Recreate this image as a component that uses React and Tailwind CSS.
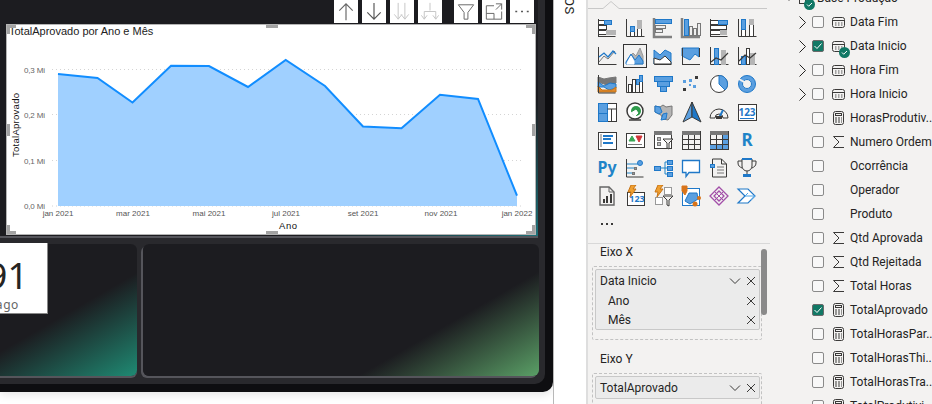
const ink = '#3b3a39';
const blue = '#5a9fe0';
const edge = '#1f78c8';
const gray = '#b5b5b5';

const pts = [
  [58, 74], [97.5, 78], [132.5, 102.5], [171, 65.7], [209, 66], [248, 87], [285.7, 60],
  [325, 86], [363, 126.5], [401.5, 128.3], [440, 94.7], [478, 99], [517, 195.7],
];
const line = pts.map((p) => p.join(',')).join(' ');
const ticks = [
  ['jan 2021', 58], ['mar 2021', 133], ['mai 2021', 209], ['jul 2021', 286],
  ['set 2021', 363], ['nov 2021', 441], ['jan 2022', 517],
];
const grid = [['0,3 Mi', 69.5], ['0,2 Mi', 114.5], ['0,1 Mi', 160.5], ['0,0 Mi', 206]];

function Bx({ x, y, w, h, f = '#fff', s = ink }) {
  return <rect x={x + 0.5} y={y + 0.5} width={w} height={h} fill={f} stroke={s} />;
}

function P({ d, s = ink, f = 'none', w = 1 }) {
  return <path d={d} stroke={s} fill={f} strokeWidth={w} />;
}

function T({ x, y, size, c, children }) {
  return (
    <text x={x} y={y} fontSize={size} fontWeight="700" fill={c} textAnchor="middle" fontFamily="'Noto Sans', sans-serif">
      {children}
    </text>
  );
}

const axes = <P d="M2.5 2v17.5h18" />;
const frame = <P d="M2 1v19h18" s="#808080" w={2.5} />;

// visual picker, row by row
const visuals = [
  <>
    <P d="M2.5 2v18" /><Bx x={2} y={3} w={6} h={4} /><Bx x={8} y={3} w={7} h={4} f={blue} s={edge} /><Bx x={2} y={8} w={8} h={4} /><Bx x={2} y={13} w={8} h={4} /><Bx x={10} y={13} w={9} h={4} f={gray} s={gray} /><P d="M2.5 19.5h17" />
  </>,
  <>
    {axes}<Bx x={6} y={9} w={4} h={10} /><Bx x={6} y={9} w={4} h={5} f={blue} s={edge} /><Bx x={13} y={3} w={4} h={16} /><Bx x={13} y={3} w={4} h={8} f={gray} s={gray} />
  </>,
  <>
    {frame}<Bx x={3} y={2} w={16} h={4} f={blue} s={edge} /><Bx x={3} y={8} w={10} h={3} f="#eee" s="#777" /><Bx x={3} y={12} w={7} h={3} f="#eee" s="#777" />
  </>,
  <>
    {frame}<Bx x={4} y={2} w={4} h={16} f={blue} s={edge} /><Bx x={9} y={9} w={3} h={9} f="#eee" s="#777" /><Bx x={13} y={11} w={3} h={7} f="#eee" s="#777" /><Bx x={17} y={6} w={3} h={12} f="#eee" s="#777" />
  </>,
  <>
    <P d="M2.5 2v18" /><Bx x={2} y={3} w={8} h={4} /><Bx x={10} y={3} w={9} h={4} f={blue} s={edge} /><Bx x={2} y={8} w={16} h={4} /><Bx x={2} y={13} w={10} h={4} /><Bx x={12} y={13} w={6} h={4} f={gray} s={gray} /><P d="M2.5 19.5h17" />
  </>,
  <>
    <P d="M2.5 2v17.5h18" /><Bx x={5} y={2} w={4} h={17} /><Bx x={5} y={2} w={4} h={10} f={blue} s={edge} /><Bx x={13} y={2} w={4} h={17} /><Bx x={13} y={2} w={4} h={5} f={gray} s={gray} />
  </>,
  <>
    {axes}<P d="M3 17l5-6 4 3 7-8" s="#777" /><P d="M3 12l5-4 4 4 5-6 3 3" s={edge} w={1.3} />
  </>,
  <>
    <P d="M4 14l5-6 3 3 4-8 3 8v8H4z" s="#999" f={gray} /><P d="M2 17l5-8 4 6 4-5 4 6v3H2z" s={edge} f={blue} /><P d="M3 18l4-7 3 5v3H3z" s="#fff" f="#fff" />
  </>,
  <>
    <P d="M2 5l6 5 5-5 6 3v11H2z" f={blue} s={edge} /><P d="M2 13l6 2 5-4 6 6v2H2z" f="#fff" s={ink} /><P d="M2.5 19.5h17" />
  </>,
  <>
    <P d="M2 3h17v9l-4-3-5 6-8-4z" f={blue} s={edge} /><P d="M2 19.5h18M2.5 3v17" /><P d="M19.5 3v9" s={ink} />
  </>,
  <>
    {axes}<Bx x={6} y={3} w={4} h={16} f={blue} s={edge} /><Bx x={13} y={5} w={4} h={14} f={gray} s={gray} /><P d="M3 17l5-4 5 2 7-7" w={1.2} />
  </>,
  <>
    {axes}<Bx x={5} y={11} w={4} h={8} f={blue} s={edge} /><Bx x={10} y={3} w={3} h={16} /><Bx x={14} y={8} w={4} h={11} f={gray} s={gray} /><P d="M3 16l6-6 5 3 6-5" w={1.2} />
  </>,
  <>
    <P d="M2 4l6 2 5-1 7-1v6l-7 3-5-2-6-2z" f="#777" s="#777" /><P d="M2 9l6 4 6-3 6 1v4l-7 2-5-3-6 0z" f={blue} s={edge} /><P d="M2 13l4 4h10l4-3v5H2z" f="#e08a2e" s="#c77416" /><P d="M2.5 2v18h17" />
  </>,
  <>
    <P d="M2.5 3v16.5h17" /><Bx x={4} y={11} w={3} h={8} /><Bx x={8} y={6} w={3} h={13} /><Bx x={12} y={6} w={3} h={5} f={blue} s={edge} /><Bx x={15} y={2} w={3} h={17} /><Bx x={15} y={2} w={3} h={6} f={blue} s={edge} />
  </>,
  <>
    <Bx x={2} y={3} w={18} h={5} f={blue} s={edge} /><Bx x={5} y={8} w={12} h={5} f={blue} s={edge} /><Bx x={8} y={13} w={6} h={5} f={blue} s={edge} />
  </>,
  <>
    <rect x="3" y="7" width="3" height="3" fill={blue} /><rect x="15" y="3" width="3" height="3" fill={ink} /><rect x="9" y="6" width="3" height="3" fill={blue} /><rect x="13" y="12" width="3" height="3" fill={blue} /><rect x="9" y="11" width="2" height="2" fill={blue} /><rect x="3" y="15" width="3" height="3" fill={ink} />
  </>,
  <>
    <circle cx="11" cy="11" r="8.5" fill="#fff" stroke={ink} /><P d="M11 2.5a8.5 8.5 0 0 1 6 14.5l-6-6z" f={blue} s={edge} />
  </>,
  <>
    <circle cx="11" cy="11" r="6.5" fill="none" stroke={blue} strokeWidth="4" /><circle cx="11" cy="11" r="8.5" fill="none" stroke={edge} /><circle cx="11" cy="11" r="4.5" fill="#f3f2f1" stroke={edge} /><P d="M3 6l5 3" s="#f3f2f1" w={2} />
  </>,
  <>
    <Bx x={2} y={2} w={18} h={18} /><Bx x={2} y={2} w={9} h={10} f={blue} s={edge} /><Bx x={2} y={12} w={9} h={8} f={blue} s={edge} /><P d="M11.5 8h8.5M15.5 8v12" />
  </>,
  <>
    <circle cx="11" cy="10" r="8" fill="#fff" stroke={ink} strokeWidth="1.5" /><circle cx="12" cy="10" r="5" fill="#2e9a4a" /><P d="M7 12l5-3 2 3-3 3z" f="#fff" s="#fff" /><P d="M5 19h12" w={1.5} />
  </>,
  <>
    <P d="M3 5l5 1 3-2 3 2 6-1v9l-4 5-5-1-2-4-6-3z" f={gray} s="#777" /><P d="M3 5l5 1 2 5-3 2-4-2z" f={blue} s={edge} /><P d="M9 19l2-6 4-1-1 6z" f={blue} s={edge} />
  </>,
  <>
    <P d="M12 1L3 21l9-5z" f={blue} /><P d="M12 1l9 20-9-5z" f={edge} />
  </>,
  <>
    <P d="M2 17a9 9 0 0 1 18 0h-5a4 4 0 0 0-8 0z" f="#f3f2f1" /><P d="M11 17l4-8" s={edge} w={2} /><rect x="8" y="15" width="6" height="3" fill={ink} />
  </>,
  <>
    <Bx x={2} y={3} w={18} h={16} /><T x={11} y={15} size={10} c={edge}>123</T><P d="M4 17.5h14" s={edge} />
  </>,
  <>
    <Bx x={2} y={3} w={18} h={17} /><P d="M5 5v13" s="#777" /><P d="M7 7h10M7 10h8M7 14h10" s={edge} w={2} />
  </>,
  <>
    <Bx x={2} y={4} w={18} h={14} /><P d="M5 12l3-5 3 5z" f="#3aa655" s="#3aa655" /><P d="M12 7h6l-3 6z" f="#d13438" s="#d13438" /><P d="M4 15.5h14" s="#777" />
  </>,
  <>
    <Bx x={2} y={2} w={17} h={17} /><rect x="2" y="2" width="18" height="4" fill="#777" /><Bx x={5} y={8} w={3} h={3} f="#bbb" s="#777" /><Bx x={5} y={13} w={3} h={3} f="#bbb" s="#777" /><P d="M11 10h10l-4 4v6l-2-1v-5z" f="#f3f2f1" />
  </>,
  <>
    <Bx x={2} y={2} w={18} h={18} f="#f3f2f1" /><rect x="2" y="2" width="18" height="4" fill="#777" /><P d="M8.5 6v14M14.5 6v14M2 10.5h18M2 15.5h18" />
  </>,
  <>
    <Bx x={2} y={2} w={18} h={18} f="#f3f2f1" /><rect x="2" y="2" width="18" height="4" fill="#777" /><rect x="14" y="6" width="6" height="14" fill={blue} /><rect x="2" y="15" width="18" height="5" fill={blue} /><P d="M8.5 6v14M14.5 6v14M2 10.5h18M2 15.5h18" />
  </>,
  <T x={11} y={17} size={17} c="#1f84c8">R</T>,
  <T x={11} y={16} size={16} c="#1f84c8">Py</T>,
  <>
    <P d="M2.5 2v18h17" /><P d="M3 7h11M3 11h8M3 16h6" s="#1f84c8" /><circle cx="16" cy="6" r="2.5" fill={blue} stroke={edge} /><Bx x={10} y={10} w={2} h={2} f="#999" s="#777" /><Bx x={8} y={15} w={2} h={2} f="#999" s="#777" />
  </>,
  <>
    <P d="M8 11h5M13 5v12M13 5h2M13 11h2M13 17h2" s="#1f84c8" /><Bx x={2} y={9} w={6} h={4} f={blue} s={edge} /><Bx x={15} y={3} w={5} h={4} f={blue} s={edge} /><Bx x={15} y={9} w={5} h={4} f={blue} s={edge} /><Bx x={15} y={15} w={5} h={4} f={blue} s={edge} />
  </>,
  <P d="M2.5 3.5h17v12H9l-3 4v-4H2.5z" f="#fff" s={edge} w={1.3} />,
  <>
    <P d="M4.5 2h9l5 5v13h-14z" f="#f3f2f1" /><P d="M13.5 2v5h5" /><Bx x={2} y={7} w={4} h={3} f={blue} s={edge} /><P d="M9 10h7M9 13h7M9 16h7" s="#777" />
  </>,
  <>
    <P d="M6 2h10v7a5 5 0 0 1-10 0z" f="#f3f2f1" /><P d="M6 4H2v2c0 3 2 4 4 5M16 4h4v2c0 3-2 4-4 5M11 14v3" /><rect x="6" y="1" width="10" height="2" fill={edge} /><rect x="7" y="17" width="8" height="3" fill={edge} />
  </>,
  <>
    <P d="M4 2h9l5 5v13H4z" f="#f3f2f1" s="#666" w={1.4} /><P d="M13 2v5h5" s="#666" /><rect x="7" y="14" width="2" height="4" fill={ink} /><rect x="10" y="11" width="2" height="7" fill={ink} /><rect x="14" y="9" width="2" height="9" fill={ink} />
  </>,
  <>
    <Bx x={3} y={7} w={17} h={13} /><P d="M7 0h5l-3 4h3l-6 8 1-5H4z" f="#f0a030" s="#c77416" /><T x={13} y={17} size={9} c={edge}>123</T>
  </>,
  <>
    <Bx x={12} y={2} w={7} h={7} s="#999" /><Bx x={3} y={12} w={7} h={7} s="#999" /><P d="M6 0h5l-3 4h3l-6 8 1-5H3z" f="#f0a030" s="#c77416" /><P d="M11 11h10l-4 4v6l-2-1v-5z" f="#f3f2f1" />
  </>,
  <>
    <Bx x={2} y={3} w={17} h={17} s={edge} f="#fff" /><P d="M9 8h8l1 6-8 5-5-3z" f={blue} s={edge} /><P d="M2 1h5v5l-2 4-3-4z" f="#d8741a" s="#d8741a" /><circle cx="19" cy="13" r="2" fill="#d8741a" /><circle cx="15" cy="19" r="2.5" fill="#d8741a" />
  </>,
  <>
    <P d="M11 2l9 9-9 9-9-9z" f="none" s="#a24fa8" w={1.3} /><P d="M11 6l5 5-5 5-5-5z" f="none" s="#a24fa8" w={1.3} /><P d="M7 7l8 8M15 7l-8 8" s="#a24fa8" />
  </>,
  <>
    <P d="M2 4h10l7 7-7 7H2l7-7z" f="#fff" s={edge} w={1.2} /><P d="M9 11h10M12 8l-3 3M15 15l4-4" s="#4aa3e8" />
  </>,
  <>
    <rect x="5" y="10" width="2" height="2" fill={ink} /><rect x="10" y="10" width="2" height="2" fill={ink} /><rect x="15" y="10" width="2" height="2" fill={ink} />
  </>,
];

function Toolbar() {
  return (
    <div className="flex h-6 justify-end gap-1 pr-[4px]">
      <ToolBtn><path d="M12 21V4M5 11l7-7 7 7" stroke="#666" fill="none" strokeWidth="1.2" /></ToolBtn>
      <ToolBtn><path d="M12 3v17M5 13l7 7 7-7" stroke="#555" fill="none" strokeWidth="1.2" /></ToolBtn>
      <ToolBtn><path d="M8 3v17M4 15l4 5 4-5M15 3v17M11 15l4 5 4-5" stroke="#c4c4c4" fill="none" /></ToolBtn>
      <ToolBtn><path d="M12 3v8M6 20v-8h12v8M3 16l3 4 3-4M15 16l3 4 3-4" stroke="#c4c4c4" fill="none" /></ToolBtn>
      <div className="w-1" />
      <ToolBtn><path d="M4 5h16l-6 8v7h-4v-7z" stroke="#666" fill="none" /></ToolBtn>
      <ToolBtn><path d="M12 6H4v14h16v-8M4 14h8v6M14 4h6v6M20 4l-6 6" stroke="#666" fill="none" /></ToolBtn>
      <ToolBtn><path d="M5 12h2M11 12h2M17 12h2" stroke="#555" fill="none" strokeWidth="1.6" /></ToolBtn>
    </div>
  );
}

function ToolBtn({ children }) {
  return (
    <div className="flex h-[23px] w-6 items-center justify-center bg-white">
      <svg width="24" height="23" viewBox="0 0 24 24">{children}</svg>
    </div>
  );
}

function Chart() {
  return (
    <svg className="block h-[197px] w-[528px]" viewBox="7 38 528 197" fontFamily="'Liberation Sans', sans-serif">
      {grid.map(([label, y]) => (
        <g key={label}>
          <line x1="52" x2="524" y1={y} y2={y} stroke="#d4d4d4" strokeDasharray="1 3" />
          <text x="24" y={y + 3} fontSize="8" fill="#666" textLength="21">{label}</text>
        </g>
      ))}
      <polygon points={`58,206 ${line} 517,206`} fill="#a0d0ff" />
      <polyline points={line} fill="none" stroke="#118dff" strokeWidth="2" />
      {ticks.map(([label, x]) => (
        <text key={label} x={x} y="216" fontSize="8" fill="#555" textAnchor="middle">{label}</text>
      ))}
      <text x="288" y="229" fontSize="9.5" fill="#111" textAnchor="middle" textLength="18">Ano</text>
      <text x="0" y="0" fontSize="9.5" fill="#111" textAnchor="middle" textLength="64" transform="translate(19 125) rotate(-90)">TotalAprovado</text>
    </svg>
  );
}

function Handles() {
  const c = 'absolute bg-[#a3a3a3]';
  return (
    <>
      <div className={`${c} left-0 top-0 h-[3px] w-[9px]`} />
      <div className={`${c} left-0 top-0 h-[9px] w-[3px]`} />
      <div className={`${c} right-0 top-0 h-[3px] w-[9px]`} />
      <div className={`${c} right-0 top-0 h-[9px] w-[3px]`} />
      <div className={`${c} bottom-0 left-0 h-[3px] w-[9px]`} />
      <div className={`${c} bottom-0 left-0 h-[9px] w-[3px]`} />
      <div className={`${c} bottom-0 right-0 h-[3px] w-[9px]`} />
      <div className={`${c} bottom-0 right-0 h-[9px] w-[3px]`} />
      <div className={`${c} left-[259px] top-0 h-[3px] w-3`} />
      <div className={`${c} bottom-0 left-[259px] h-[3px] w-3`} />
      <div className={`${c} left-0 top-[99px] h-3 w-[3px]`} />
      <div className={`${c} right-0 top-[99px] h-3 w-[3px]`} />
    </>
  );
}

function Canvas() {
  return (
    <div className="flex h-full w-[553px] shrink-0 flex-col">
      <div className="h-[392px] overflow-hidden rounded-br-[10px] bg-[#0e0e11] pr-2 shadow-[0_3px_8px_rgba(0,0,0,0.1)]">
        <div className="h-[384px] rounded-br-[10px] bg-[#29292d]">
          <div className="h-[236px] w-[538px] bg-[linear-gradient(150deg,#1c1c20_75%,#1d7078_100%)] shadow-[0_2px_0_#55555b]">
            <Toolbar />
            <div className="relative ml-[6px] h-[211px] w-[530px] border border-[#b4b4b4] bg-white">
              <div className="h-[13px] pl-[2px] font-['Liberation_Sans',sans-serif] text-[11px] leading-[13px] text-[#222]">
                TotalAprovado por Ano e Mês
              </div>
              <Chart />
              <Handles />
            </div>
          </div>
          <div className="mt-2 flex h-[132px] w-[539px] gap-[6px]">
            <div className="relative h-full w-[137px] rounded-r-[6px] bg-[linear-gradient(150deg,#1c1c20_51%,#1f8a73_100%)] shadow-[0_2px_0_#55555b]">
              <div className="absolute -top-px left-0 flex h-[71px] w-[48px] flex-col items-end overflow-hidden border-b border-r border-[#888] bg-white pr-[19px] text-[#252423]">
                <span className="mt-[13px] font-['Noto_Sans',sans-serif] text-[36px] leading-[40px] whitespace-nowrap">91</span>
                <span className="mr-[9px] mt-[2px] font-['Noto_Sans',sans-serif] text-[12px] leading-[14px] tracking-[0.6px] text-[#666]">ago</span>
              </div>
            </div>
            <div className="h-full w-[396px] rounded-[6px] bg-[linear-gradient(150deg,#1c1c20_71%,#5a9f66_100%)] shadow-[-2px_2px_0_#55555b]" />
          </div>
        </div>
      </div>
    </div>
  );
}

function X() {
  return (
    <svg width="10" height="10" viewBox="0 0 10 10">
      <path d="M1 1l8 8M9 1l-8 8" stroke="#3b3a39" fill="none" />
    </svg>
  );
}

function Down() {
  return (
    <svg width="12" height="10" viewBox="0 0 12 10">
      <path d="M1 2.5l5 5 5-5" stroke="#3b3a39" fill="none" />
    </svg>
  );
}

function Well({ label, children, className }) {
  return (
    <div className={className}>
      <div className="pl-[12px] text-xs leading-4">{label}</div>
      {children}
    </div>
  );
}

function VisualsPane() {
  return (
    <div className="relative h-full w-[184px] shrink-0 border-l-2 border-[#dedede] text-[#252423]">
      <svg className="block" width="182" height="9" viewBox="0 0 182 9">
        <path d="M0 8.5h15l8-7 8 7h148" fill="none" stroke="#c8c8c8" />
      </svg>
      <div className="ml-[5px] mt-[5px] grid grid-cols-[repeat(6,28px)] auto-rows-[28px]">
        {visuals.map((v, i) => (
          <div key={i} className="flex items-center justify-center">
            <div className={i === 7 ? 'border border-[#333]' : ''}>
              <svg width="22" height="22" viewBox="0 0 22 22" className="block">{v}</svg>
            </div>
          </div>
        ))}
      </div>
      <div className="mt-[5px] h-px bg-[#d8d8d8]" />
      <Well label="Eixo X">
        <div className="ml-[4px] mt-[6px] h-[74px] w-[170px] rounded-[2px] border border-dashed border-[#c2c2c2] p-[2px]">
          <div className="w-[165px] rounded-[2px] border border-[#c8c8c8] bg-[#ebebeb] text-xs">
            <div className="flex h-[21px] items-center pl-[4px] pr-[3px]">
              <span className="flex-1">Data Inicio</span><Down /><span className="ml-[5px]"><X /></span>
            </div>
            <div className="flex h-[19px] items-center pl-3 pr-[3px]">
              <span className="flex-1">Ano</span><X />
            </div>
            <div className="flex h-[19px] items-center pl-3 pr-[3px]">
              <span className="flex-1">Mês</span><X />
            </div>
          </div>
        </div>
      </Well>
      <Well label="Eixo Y" className="mt-[11px]">
        <div className="ml-[4px] mt-[6px] h-[40px] w-[170px] rounded-[2px] border border-dashed border-[#c2c2c2] p-[2px]">
          <div className="flex h-[23px] w-[165px] items-center rounded-[2px] border border-[#c8c8c8] bg-[#ebebeb] pl-[4px] pr-[3px] text-xs">
            <span className="flex-1">TotalAprovado</span><Down /><span className="ml-[5px]"><X /></span>
          </div>
        </div>
      </Well>
      <div className="absolute left-[173px] top-[249px] h-[66px] w-[6px] rounded-[3px] bg-[#8a8a8a]" />
    </div>
  );
}

function Calendar() {
  return (
    <svg width="13" height="13" viewBox="0 0 13 13">
      <rect x="0.5" y="1.5" width="12" height="10" rx="2" fill="none" stroke="#3b3a39" />
      <path d="M1 4.5h11" stroke="#3b3a39" />
      <path d="M3 7h1.5M6 7h1.5M9 7h1.5M3 9h1.5M6 9h1.5M9 9h1.5" stroke="#555" />
    </svg>
  );
}

function Calc() {
  return (
    <svg width="13" height="14" viewBox="0 0 13 14">
      <rect x="1.5" y="0.5" width="10" height="13" rx="2" fill="none" stroke="#3b3a39" />
      <rect x="3.5" y="2.5" width="6" height="2" fill="none" stroke="#3b3a39" />
      <path d="M3 7h2M6 7h2M9 7h1M3 9h2M6 9h2M9 9h1M3 11h2M6 11h2M9 11h1" stroke="#3b3a39" />
    </svg>
  );
}

function Sigma() {
  return (
    <svg width="13" height="14" viewBox="0 0 13 14">
      <path d="M12 1.5H1.5L7 7l-5.5 5.5H12" fill="none" stroke="#3b3a39" />
    </svg>
  );
}

const fields = [
  { name: 'Data Fim', icon: 'date', more: true },
  { name: 'Data Inicio', icon: 'date', more: true, checked: true, used: true },
  { name: 'Hora Fim', icon: 'date', more: true },
  { name: 'Hora Inicio', icon: 'date', more: true },
  { name: 'HorasProdutiv...', icon: 'calc' },
  { name: 'Numero Ordem', icon: 'sum' },
  { name: 'Ocorrência' },
  { name: 'Operador' },
  { name: 'Produto' },
  { name: 'Qtd Aprovada', icon: 'sum' },
  { name: 'Qtd Rejeitada', icon: 'sum' },
  { name: 'Total Horas', icon: 'sum' },
  { name: 'TotalAprovado', icon: 'calc', checked: true },
  { name: 'TotalHorasPar...', icon: 'calc' },
  { name: 'TotalHorasThi...', icon: 'calc' },
  { name: 'TotalHorasTra...', icon: 'calc' },
  { name: 'TotalProdutivi...', icon: 'calc' },
];

function Badge({ className }) {
  return (
    <span className={`absolute flex h-[11px] w-[11px] items-center justify-center rounded-full bg-[#117865] ${className}`}>
      <svg width="7" height="7" viewBox="0 0 7 7"><path d="M1 3.5l1.7 1.7L6 2" stroke="#fff" fill="none" /></svg>
    </span>
  );
}

function FieldRow({ f }) {
  return (
    <div className="flex h-6 items-center whitespace-nowrap">
      <div className="w-[42px] pl-[29px]">
        {f.more && (
          <svg className="block" width="7" height="13" viewBox="0 0 7 13">
            <path d="M0.5 0.5l6 6-6 6" fill="none" stroke="#252423" />
          </svg>
        )}
      </div>
      <div className={`flex h-3 w-3 items-center justify-center rounded-[2px] border ${f.checked ? 'border-[#6a6a6a] bg-[#117865]' : 'border-[#8a8a8a] bg-[#f8f8f8]'}`}>
        {f.checked && (
          <svg width="10" height="10" viewBox="0 0 10 10"><path d="M1.5 5l2.5 2.5L8.5 2.5" stroke="#fff" fill="none" /></svg>
        )}
      </div>
      <div className="relative ml-2 flex w-[13px] justify-center">
        {f.icon === 'date' && <Calendar />}
        {f.icon === 'calc' && <Calc />}
        {f.icon === 'sum' && <Sigma />}
        {f.used && <Badge className="left-[7px] top-[7px]" />}
      </div>
      <span className="ml-[5px] text-xs">{f.name}</span>
    </div>
  );
}

function FieldsPane() {
  return (
    <div className="h-full flex-1 overflow-hidden text-[#252423]">
      <div className="relative -mt-[14px] flex h-6 items-center whitespace-nowrap pl-[16px]">
        <span className="h-0 w-0 border-x-[3px] border-t-[5px] border-x-transparent border-t-[#252423]" />
        <svg className="ml-[7px]" width="13" height="13" viewBox="0 0 13 13">
          <rect x="0.5" y="1.5" width="12" height="10" fill="none" stroke="#3b3a39" />
          <path d="M1 5h11M6.5 2v9" stroke="#3b3a39" />
        </svg>
        <Badge className="left-[34px] top-[13px]" />
        <span className="ml-[5px] text-xs">Base Produção</span>
      </div>
      {fields.map((f) => (
        <FieldRow key={f.name} f={f} />
      ))}
    </div>
  );
}

export default function App() {
  return (
    <div className="flex h-[404px] w-[932px] overflow-hidden bg-white font-['Roboto',sans-serif]">
      <Canvas />
      <div className="flex h-full w-[33px] shrink-0 justify-center border-l border-[#b8b8b8] bg-white">
        <div className="-ml-[2px] flex h-[15px] items-end overflow-hidden">
          <span className="text-[13px] leading-none tracking-[0.5px] text-[#252423] [writing-mode:vertical-rl]">OS</span>
        </div>
      </div>
      <div className="flex h-full flex-1 bg-[#f3f2f1]">
        <VisualsPane />
        <FieldsPane />
      </div>
    </div>
  );
}
